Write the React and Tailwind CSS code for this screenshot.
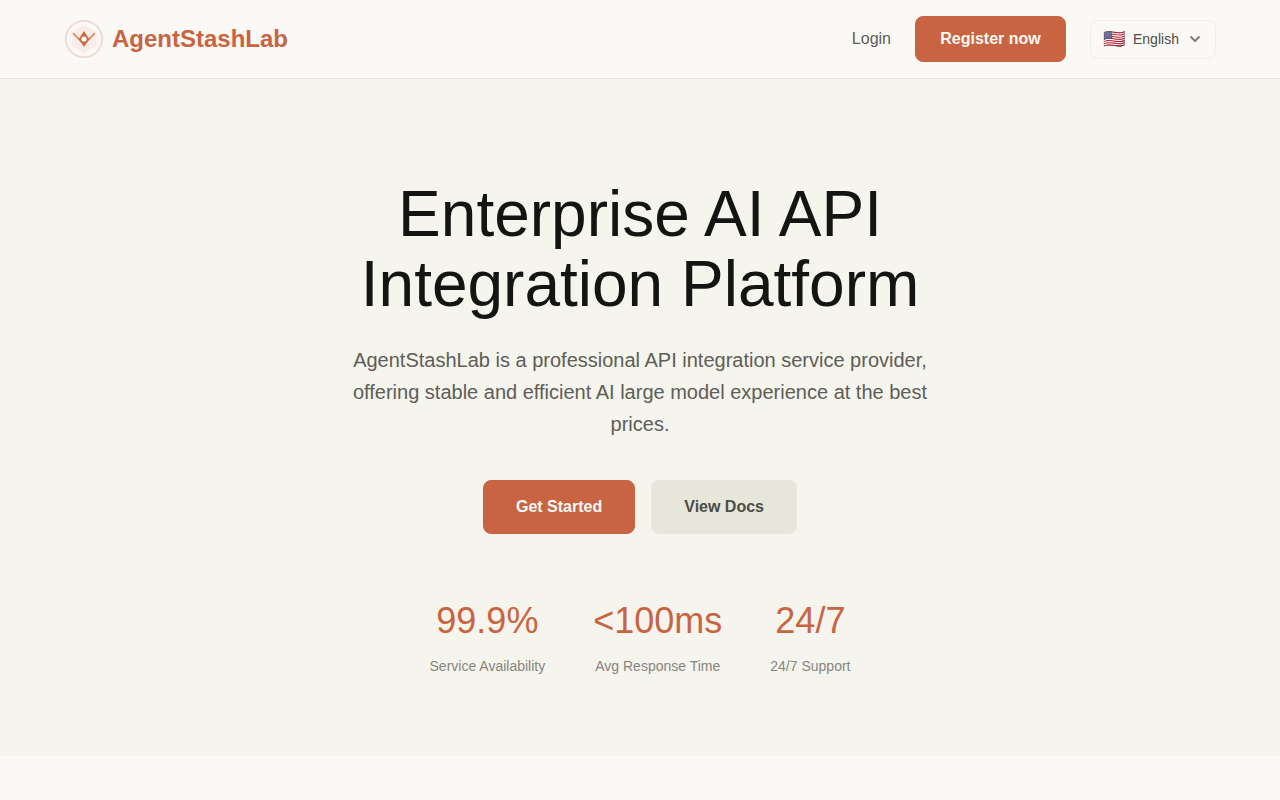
import React, { useState } from "react";

const stats = [
  { value: "99.9%", label: "Service Availability" },
  { value: "<100ms", label: "Avg Response Time" },
  { value: "24/7", label: "24/7 Support" },
];

const languages = [
  { code: "en", name: "English", flag: "🇺🇸" },
  { code: "fr", name: "Français", flag: "🇫🇷" },
  { code: "de", name: "Deutsch", flag: "🇩🇪" },
];

function Logo() {
  return (
    <svg className="w-10 h-10" viewBox="0 0 40 40" fill="none" aria-hidden="true">
      <circle cx="20" cy="20" r="18.2" stroke="#f0d8d2" strokeWidth="1.8" />
      <path d="M20 6l12.500 7v14L20 34 7.500 27V13z" fill="#f9ebe5" />
      <path d="M9.500 14.500l8 8.500M30.500 14.500l-8 8.500" stroke="#d2805f" strokeWidth="1.6" strokeLinecap="round" />
      <path d="M20 12l5.200 8L20 28l-5.200-8z" fill="#cb6a49" />
      <circle cx="20" cy="20" r="2.600" fill="#fdf9f4" />
    </svg>
  );
}

function Header() {
  const [language, setLanguage] = useState("en");
  const current = languages.find((item) => item.code === language);

  return (
    <header className="bg-[#fbf9f5] border-b border-[#e8e6df]">
      <div className="max-w-6xl mx-auto py-4 flex items-center justify-between">
        <a href="#home" className="flex items-center gap-2 text-2xl font-bold text-[#c96442]">
          <Logo />
          AgentStashLab
        </a>
        <nav className="flex items-center gap-6">
          <a href="#login" className="text-base text-[#5e5d59]">
            Login
          </a>
          <button
            type="button"
            className="w-[151px] rounded-lg border border-[#c96442] bg-[#c96442] py-2.5 text-base font-bold text-[#faf9f5] cursor-pointer"
          >
            Register now
          </button>
          <div className="grid items-center rounded-lg border border-[#f0eee6] bg-[#fbf9f5]">
            <div className="col-start-1 row-start-1 flex items-center justify-between pl-3 pr-3.5 pointer-events-none">
              <span className="text-lg/5" aria-hidden="true">
                {current.flag}
              </span>
              <svg className="w-3 h-3" viewBox="0 0 12 12" fill="none" aria-hidden="true">
                <path d="M1.500 3.500L6 8l4.500-4.500" stroke="#807e79" strokeWidth="2" />
              </svg>
            </div>
            <select
              aria-label="Language"
              value={language}
              onChange={(e) => setLanguage(e.target.value)}
              className="col-start-1 row-start-1 w-31 appearance-none bg-transparent py-2 pl-[42px] pr-8 text-sm/[21px] text-[#4d4c48] cursor-pointer"
            >
              {languages.map((item) => (
                <option key={item.code} value={item.code}>
                  {item.name}
                </option>
              ))}
            </select>
          </div>
        </nav>
      </div>
    </header>
  );
}

function Hero() {
  return (
    <section className="bg-[#f5f4ed] px-6 pt-[100px] pb-20 text-center">
      <h1 className="max-w-3xl mx-auto text-[64px]/[70px] text-[#141413]">
        Enterprise AI API
        <br />
        Integration Platform
      </h1>
      <p className="max-w-[600px] mx-auto mt-[25px] text-xl/8 text-[#5e5d59]">
        AgentStashLab is a professional API integration service provider, offering stable and
        efficient AI large model experience at the best prices.
      </p>
      <div className="mt-10 flex justify-center gap-4">
        <button
          type="button"
          className="rounded-lg border border-[#c96442] bg-[#c96442] px-8 py-3.5 text-base font-bold text-[#faf9f5] cursor-pointer"
        >
          Get Started
        </button>
        <button
          type="button"
          className="rounded-lg border border-[#e6e6da] bg-[#e6e6da] px-8 py-3.5 text-base font-bold text-[#4d4c48] cursor-pointer"
        >
          View Docs
        </button>
      </div>
      <div className="mt-16 flex justify-center gap-12">
        {stats.map((stat) => (
          <div key={stat.label}>
            <div className="text-4xl/[46px] text-[#c96442]">{stat.value}</div>
            <div className="mt-3 text-sm/5 text-[#87867f]">{stat.label}</div>
          </div>
        ))}
      </div>
    </section>
  );
}

export default function App() {
  return (
    <div className="min-h-screen bg-[#faf9f5] font-['Liberation_Sans',Arial,sans-serif]">
      <Header />
      <main>
        <Hero />
      </main>
    </div>
  );
}
